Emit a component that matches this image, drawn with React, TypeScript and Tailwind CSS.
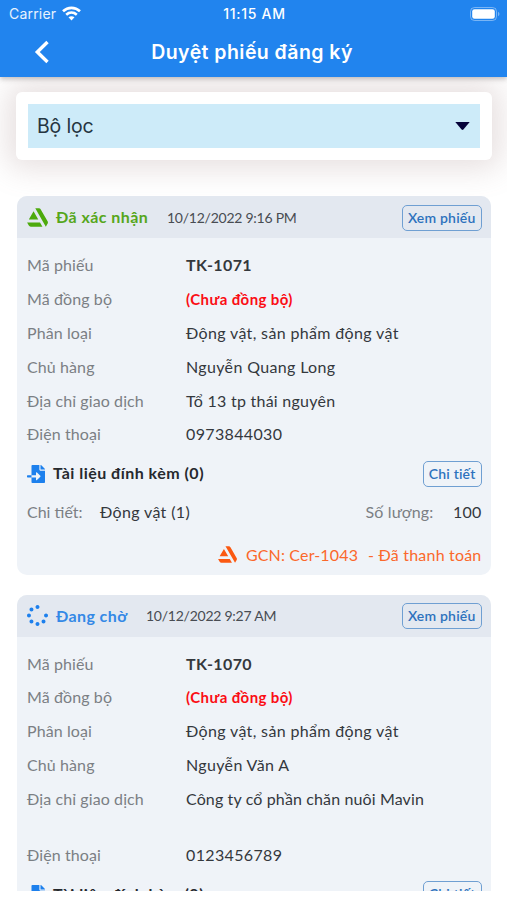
import type { ReactNode } from "react";
import { FaArtstation, FaFileImport, FaSpinner } from "react-icons/fa";

function StatusBar() {
  return (
    <div className="grid h-[27px] grid-cols-3 items-center pl-[9px] pr-[7px] text-[14px] text-white">
      <div className="flex items-center gap-[6px]">
        <span className="tracking-[0.2px] text-white/90">Carrier</span>
        <svg width="19" height="15" viewBox="0 0 19 15" fill="none" stroke="white" strokeWidth="2.6">
          <path d="M1 5.3C5.8.7 13.2.7 18 5.3" />
          <path d="M4.2 8.7C7.3 5.9 11.7 5.9 14.8 8.7" />
          <path d="M9.5 14.4 6.5 11.3C8.2 9.8 10.8 9.8 12.5 11.3Z" fill="white" stroke="none" />
        </svg>
      </div>
      <span className="text-center font-medium tracking-[0.7px] whitespace-nowrap">11:15 AM</span>
      <svg className="justify-self-end" width="30" height="14" viewBox="0 0 30 14">
        <rect x="0.5" y="0.5" width="26" height="13" rx="4" fill="none" stroke="white" strokeOpacity=".4" />
        <rect x="2.2" y="2.3" width="22.6" height="9.4" rx="2.3" fill="white" />
        <path d="M28 4.8c2 .8 2 3.6 0 4.4Z" fill="white" fillOpacity=".4" />
      </svg>
    </div>
  );
}

function OutlineButton({ children }: { children: ReactNode }) {
  return (
    <button className="mt-px block h-[26px] shrink-0 rounded-[5px] border border-[#6f9fd2] px-[5px] text-[14px] leading-[22px] font-semibold tracking-[0.2px] whitespace-nowrap text-[#2d72bd]">
      {children}
    </button>
  );
}

function Row({ label, children, tall = false }: { label: string; children: ReactNode; tall?: boolean }) {
  return (
    <div className={tall ? "flex h-[56px]" : "flex h-[33.9px]"}>
      <div className="w-[159px] leading-[34px] tracking-[0.1px] text-[#7b7f84]">{label}</div>
      <div className="leading-[34px] tracking-[0.35px] whitespace-nowrap text-[#34383d]">{children}</div>
    </div>
  );
}

type CardProps = {
  icon: ReactNode;
  status: string;
  statusClass: string;
  time: string;
  code: string;
  owner: string;
  address: ReactNode;
  phone: string;
  tall?: boolean;
};

function Card({ icon, status, statusClass, time, code, owner, address, phone, tall }: CardProps) {
  return (
    <section className="h-[379px] shrink-0 overflow-hidden rounded-[10px] bg-[#eff3f8] text-[16px]">
      <header className="flex h-[42px] items-center bg-[#e3e8f0] pr-[9px] pl-[10px]">
        {icon}
        <span className={statusClass}>{status}</span>
        <span className="text-[14px] tracking-[-0.25px] whitespace-nowrap text-[#484c52]">{time}</span>
        <span className="ml-auto">
          <OutlineButton>Xem phiếu</OutlineButton>
        </span>
      </header>
      <div className="pt-[10px] pr-[9px] pl-[10px]">
        <Row label="Mã phiếu">
          <b className="tracking-[0.4px]">{code}</b>
        </Row>
        <Row label="Mã đồng bộ">
          <b className="text-[15px] tracking-[0.4px] text-[#fb0d14]">(Chưa đồng bộ)</b>
        </Row>
        <Row label="Phân loại">Động vật, sản phẩm động vật</Row>
        <Row label="Chủ hàng">{owner}</Row>
        <Row label="Địa chỉ giao dịch" tall={tall}>
          {address}
        </Row>
        <Row label="Điện thoại">{phone}</Row>
        <div className="flex h-[44px] items-center">
          <FaFileImport size={18} color="#1d80ed" className="mt-px" />
          <b className="ml-[8px] tracking-[0.48px] whitespace-nowrap text-[#26292e]">Tài liệu đính kèm (0)</b>
          <span className="ml-auto">
            <OutlineButton>Chi tiết</OutlineButton>
          </span>
        </div>
        <div className="flex h-[34px] items-center whitespace-nowrap text-[#34383d]">
          <span className="w-[73px] text-[#7b7f84]">Chi tiết:</span>
          <span className="tracking-[0.35px]">Động vật (1)</span>
          <span className="ml-auto tracking-[0.15px] text-[#7b7f84]">Số lượng:</span>
          <span className="w-[48px] text-right tracking-[0.2px]">100</span>
        </div>
        <div className="flex h-[51px] items-center justify-end whitespace-nowrap text-[#fb682b]">
          <FaArtstation size={19} color="#fb5912" />
          <span className="ml-[9px] tracking-[0.15px]">GCN: Cer-1043</span>
          <span className="ml-[10px] tracking-[0.2px]">- Đã thanh toán</span>
        </div>
      </div>
    </section>
  );
}

export default function App() {
  return (
    <div className="h-[900px] w-[507px] overflow-hidden bg-white font-['Inter','Liberation_Sans',sans-serif]">
      <div className="relative z-10 h-[77px] bg-[#2184ee] shadow-[0_2px_5px_rgba(60,50,50,0.3)]">
        <StatusBar />
        <div className="grid h-[49px] grid-cols-[1fr_auto_1fr] items-center text-white">
          <svg className="ml-[34px]" width="16" height="24" viewBox="0 0 16 24" fill="none" stroke="white" strokeWidth="3.4">
            <path d="M13.5 2 3.3 12 13.5 22" />
          </svg>
          <h1 className="pt-[2px] pr-[3px] text-[19.5px] font-semibold tracking-[0.45px] whitespace-nowrap">Duyệt phiếu đăng ký</h1>
        </div>
      </div>
      <div className="h-[104px] px-[16px] pt-[15px]">
        <div className="h-[67.5px] w-[475.5px] rounded-[6px] bg-white p-[12px] pr-[11.5px] shadow-[0_0_30px_9px_rgba(145,115,112,0.22)]">
          <div className="flex h-[44px] items-center justify-between bg-[#cdebf9] pr-[10px] pl-[9px]">
            <span className="pt-px text-[19.5px] tracking-[-0.15px] text-[#253541]">Bộ lọc</span>
            <svg width="15" height="9" viewBox="0 0 15 9" fill="#06033a">
              <path d="M.3 0h14.4L8.4 7.5q-.9.9-1.8 0Z" />
            </svg>
          </div>
        </div>
      </div>
      <main className="flex h-[710px] flex-col gap-[19.5px] overflow-hidden pt-[15px] pr-[16.5px] pl-[17px] font-['Lato','Noto_Sans',sans-serif]">
        <Card
          icon={<FaArtstation size={21} color="#4daa0d" />}
          status="Đã xác nhận"
          statusClass="ml-[8px] w-[111px] font-bold tracking-[0.45px] whitespace-nowrap text-[#56a61b]"
          time="10/12/2022 9:16 PM"
          code="TK-1071"
          owner="Nguyễn Quang Long"
          address={<span className="tracking-[0.25px]">Tổ 13 tp thái nguyên</span>}
          phone="0973844030"
        />
        <Card
          icon={<FaSpinner size={21} color="#1d80ed" />}
          status="Đang chờ"
          statusClass="ml-[8px] w-[90px] font-bold tracking-[0.4px] whitespace-nowrap text-[#3489e6]"
          time="10/12/2022 9:27 AM"
          code="TK-1070"
          owner="Nguyễn Văn A"
          address={<span className="tracking-[0.13px]">Công ty cổ phần chăn nuôi Mavin</span>}
          phone="0123456789"
          tall
        />
      </main>
    </div>
  );
}
